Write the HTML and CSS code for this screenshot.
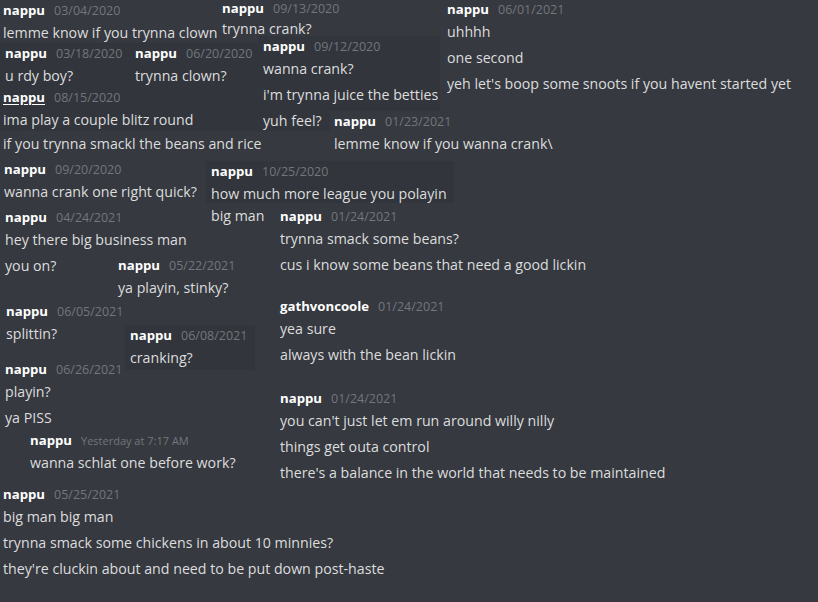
FILE: index.html
```html
<!DOCTYPE html>
<html>
<head>
<meta charset="utf-8">
<link rel="stylesheet" href="styles.css">
</head>
<body>
<div class="canvas">
  <div class="snip s1"><div class="hd"><span class="name">nappu</span><span class="ts">03/04/2020</span></div><div class="ln">lemme know if you trynna clown</div></div>
  <div class="snip s2"><div class="hd hd-tight"><span class="name">nappu</span><span class="ts">09/13/2020</span></div><div class="ln">trynna crank?</div></div>
  <div class="snip s3"><div class="hd"><span class="name">nappu</span><span class="ts">06/01/2021</span></div><div class="ln">uhhhh</div><div class="ln">one second</div><div class="ln">yeh let's boop some snoots if you havent started yet</div></div>
  <div class="snip dark s4"><div class="hd"><span class="name">nappu</span><span class="ts">03/18/2020</span></div><div class="ln">u rdy boy?</div></div>
  <div class="snip dark s5"><div class="hd"><span class="name">nappu</span><span class="ts">06/20/2020</span></div><div class="ln">trynna clown?</div></div>
  <div class="snip dark s6"><div class="hd"><span class="name">nappu</span><span class="ts">09/12/2020</span></div><div class="ln">wanna crank?</div><div class="ln">i'm trynna juice the betties</div><div class="ln">yuh feel?</div></div>
  <div class="snip s7"><div class="dark hl hl7"><div class="hd"><span class="name ul">nappu</span><span class="ts">08/15/2020</span></div><div class="ln">ima play a couple blitz round</div></div><div class="ln">if you trynna smackl the beans and rice</div></div>
  <div class="snip plain s8"><div class="hd"><span class="name">nappu</span><span class="ts">01/23/2021</span></div><div class="ln">lemme know if you wanna crank\</div></div>
  <div class="snip s9"><div class="hd"><span class="name">nappu</span><span class="ts">09/20/2020</span></div><div class="ln">wanna crank one right quick?</div></div>
  <div class="snip s10"><div class="dark hl hl10"><div class="hd"><span class="name">nappu</span><span class="ts">10/25/2020</span></div><div class="ln">how much more league you polayin</div></div><div class="ln">big man</div></div>
  <div class="snip s11"><div class="hd"><span class="name">nappu</span><span class="ts">04/24/2021</span></div><div class="ln">hey there big business man</div><div class="ln">you on?</div></div>
  <div class="snip s12"><div class="hd"><span class="name">nappu</span><span class="ts">05/22/2021</span></div><div class="ln">ya playin, stinky?</div></div>
  <div class="snip s13"><div class="hd"><span class="name">nappu</span><span class="ts">01/24/2021</span></div><div class="ln">trynna smack some beans?</div><div class="ln">cus i know some beans that need a good lickin</div></div>
  <div class="snip s14"><div class="hd"><span class="name">gathvoncoole</span><span class="ts">01/24/2021</span></div><div class="ln">yea sure</div><div class="ln">always with the bean lickin</div></div>
  <div class="snip s15"><div class="hd"><span class="name">nappu</span><span class="ts">01/24/2021</span></div><div class="ln">you can't just let em run around willy nilly</div><div class="ln">things get outa control</div><div class="ln">there's a balance in the world that needs to be maintained</div></div>
  <div class="snip s16"><div class="hd"><span class="name">nappu</span><span class="ts">06/05/2021</span></div><div class="ln">splittin?</div></div>
  <div class="snip s18"><div class="hd"><span class="name">nappu</span><span class="ts">06/26/2021</span></div><div class="ln">playin?</div><div class="ln">ya PISS</div></div>
  <div class="snip dark s17"><div class="hd"><span class="name">nappu</span><span class="ts">06/08/2021</span></div><div class="ln">cranking?</div></div>
  <div class="snip s19"><div class="hd"><span class="name">nappu</span><span class="ts small">Yesterday at 7:17 AM</span></div><div class="ln">wanna schlat one before work?</div></div>
  <div class="snip s20"><div class="hd"><span class="name">nappu</span><span class="ts">05/25/2021</span></div><div class="ln">big man big man</div><div class="ln">trynna smack some chickens in about 10 minnies?</div><div class="ln">they're cluckin about and need to be put down post-haste</div></div>
</div>
</body>
</html>
```
FILE: styles.css
```css
html, body {
  margin: 0;
  padding: 0;
  background: #36393f;
}
.canvas {
  position: relative;
  width: 818px;
  height: 602px;
  overflow: hidden;
  background: #36393f;
  font-family: "Open Sans", "Noto Sans", sans-serif;
  color: #dcddde;
}
.snip {
  position: absolute;
  white-space: nowrap;
}
.dark {
  background: #32353b;
}
.plain {
  background: #36393f;
  padding-right: 8px;
}
.hd {
  display: flex;
  align-items: baseline;
  gap: 9px;
  height: 20px;
  line-height: 20px;
}
.hd-tight {
  height: 16px;
  line-height: 16px;
}
.name {
  font-size: 13.2px;
  font-weight: 700;
  color: #ffffff;
}
.name.ul {
  text-decoration: underline;
  text-underline-offset: 2px;
}
.ts {
  font-size: 12.5px;
  color: #72767d;
}
.ts.small {
  font-size: 11px;
}
.ln {
  font-size: 14.2px;
  line-height: 26px;
  height: 26px;
}

.s1 { left: 3px; top: 0px; }
.s2 { left: 222px; top: 0px; }
.s3 { left: 447px; top: -1px; }
.s4 { left: 0; top: 43px; width: 125px; height: 45px; padding-left: 5px; }
.s5 { left: 130px; top: 43px; width: 125px; height: 45px; padding-left: 5px; }
.s6 { left: 258px; top: 36px; width: 177px; height: 95px; padding-left: 5px; }
.s7 { left: 0; top: 87px; }
.hl7 { width: 257px; padding-left: 3px; height: 44px; }
.s7 > .ln { padding-left: 3px; }
.s8 { left: 330px; top: 111px; padding-left: 4px; }
.s9 { left: 4px; top: 159px; }
.s10 { left: 206px; top: 161px; }
.hl10 { width: 243px; padding-left: 5px; height: 42px; }
.s10 > .ln { padding-left: 5px; }
.s11 { left: 5px; top: 207px; }
.s12 { left: 118px; top: 255px; }
.s13 { left: 280px; top: 206px; }
.s14 { left: 280px; top: 296px; }
.s15 { left: 280px; top: 388px; }
.s16 { left: 6px; top: 301px; }
.s17 { left: 125px; top: 325px; width: 125px; height: 45px; padding-left: 5px; }
.s18 { left: 5px; top: 359px; }
.s19 { left: 30px; top: 430px; }
.s20 { left: 3px; top: 484px; }
```
